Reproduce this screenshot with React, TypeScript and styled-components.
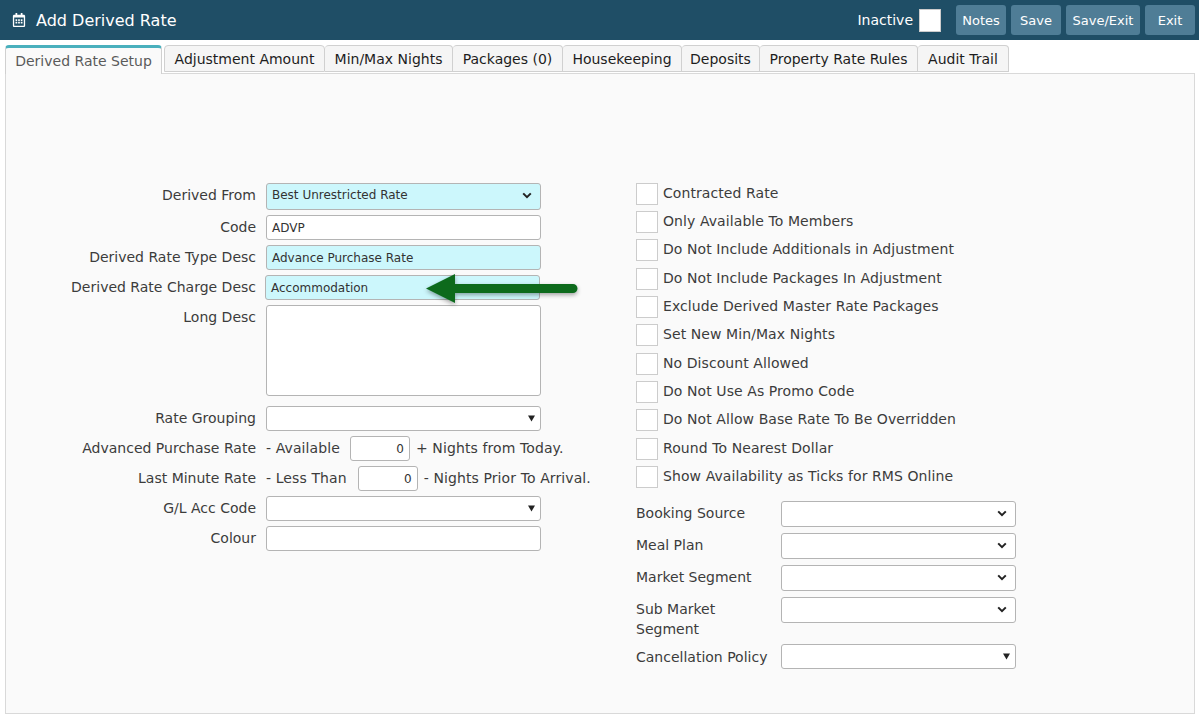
import React from "react";
import styled, { createGlobalStyle } from "styled-components";
import { FaRegCalendarAlt } from "react-icons/fa";

const tabs = [
  { name: "Derived Rate Setup", width: 157 },
  { name: "Adjustment Amount", width: 161 },
  { name: "Min/Max Nights", width: 128 },
  { name: "Packages (0)", width: 110 },
  { name: "Housekeeping", width: 119 },
  { name: "Deposits", width: 78 },
  { name: "Property Rate Rules", width: 158 },
  { name: "Audit Trail", width: 91 },
];

const checks = [
  "Contracted Rate",
  "Only Available To Members",
  "Do Not Include Additionals in Adjustment",
  "Do Not Include Packages In Adjustment",
  "Exclude Derived Master Rate Packages",
  "Set New Min/Max Nights",
  "No Discount Allowed",
  "Do Not Use As Promo Code",
  "Do Not Allow Base Rate To Be Overridden",
  "Round To Nearest Dollar",
  "Show Availability as Ticks for RMS Online",
];

function Chevron() {
  return (
    <ArrowIcon width="10" height="7" viewBox="0 0 10 7">
      <path d="M1.2 1.4 5 5.2l3.8-3.8" fill="none" stroke="#222" strokeWidth="2" />
    </ArrowIcon>
  );
}

function Triangle() {
  return (
    <TriangleIcon width="7" height="7" viewBox="0 0 7 7">
      <path d="M0 .5h7L3.5 6.5z" fill="#222" />
    </TriangleIcon>
  );
}

function App() {
  return (
    <>
      <GlobalStyle />
      <Header>
        <Title>
          <FaRegCalendarAlt size={14} />
          <span>Add Derived Rate</span>
        </Title>
        <Actions>
          <InactiveLabel>Inactive</InactiveLabel>
          <InactiveBox />
          <Button>Notes</Button>
          <Button>Save</Button>
          <Button $wide>Save/Exit</Button>
          <Button>Exit</Button>
        </Actions>
      </Header>
      <TabBar>
        {tabs.map((tab, index) => (
          <Tab key={tab.name} $active={index === 0} $width={tab.width}>
            {tab.name}
          </Tab>
        ))}
      </TabBar>
      <Panel>
        <LeftColumn>
          <Row>
            <Label>Derived From</Label>
            <Select $tinted $tall>
              Best Unrestricted Rate
              <Chevron />
            </Select>
          </Row>
          <Row>
            <Label>Code</Label>
            <Input>ADVP</Input>
          </Row>
          <Row>
            <Label>Derived Rate Type Desc</Label>
            <Input $tinted>Advance Purchase Rate</Input>
          </Row>
          <Row>
            <Label>Derived Rate Charge Desc</Label>
            <ArrowWrap>
              <Input $tinted>Accommodation</Input>
              <GreenArrow width="160" height="56" viewBox="0 0 160 56">
                <defs>
                  <filter id="arrowShadow" x="-10%" y="-30%" width="120%" height="170%">
                    <feDropShadow dx="0" dy="2" stdDeviation="2" floodColor="#000" floodOpacity="0.35" />
                  </filter>
                </defs>
                <path
                  d="M3 26.5 32 12v10h118a4.5 4.5 0 0 1 0 9H32v10z"
                  fill="#0e6b1f"
                  filter="url(#arrowShadow)"
                />
              </GreenArrow>
            </ArrowWrap>
          </Row>
          <Row>
            <Label>Long Desc</Label>
            <TextArea />
          </Row>
          <SpacedRow>
            <Label>Rate Grouping</Label>
            <Select>
              <Triangle />
            </Select>
          </SpacedRow>
          <Row>
            <Label>Advanced Purchase Rate</Label>
            <InlineText>- Available</InlineText>
            <NumberBox $gap={10}>0</NumberBox>
            <InlineText>+ Nights from Today.</InlineText>
          </Row>
          <Row>
            <Label>Last Minute Rate</Label>
            <InlineText>- Less Than</InlineText>
            <NumberBox $gap={11}>0</NumberBox>
            <InlineText>- Nights Prior To Arrival.</InlineText>
          </Row>
          <Row>
            <Label>G/L Acc Code</Label>
            <Select>
              <Triangle />
            </Select>
          </Row>
          <Row>
            <Label>Colour</Label>
            <Input />
          </Row>
        </LeftColumn>
        <RightColumn>
          <CheckList>
            {checks.map((check) => (
              <CheckRow key={check}>
                <CheckBox />
                <span>{check}</span>
              </CheckRow>
            ))}
          </CheckList>
          <SelectList>
            <SideRow>
              <SideLabel>Booking Source</SideLabel>
              <SideSelect>
                <Chevron />
              </SideSelect>
            </SideRow>
            <SideRow>
              <SideLabel>Meal Plan</SideLabel>
              <SideSelect>
                <Chevron />
              </SideSelect>
            </SideRow>
            <SideRow>
              <SideLabel>Market Segment</SideLabel>
              <SideSelect>
                <Chevron />
              </SideSelect>
            </SideRow>
            <SideRow>
              <SideLabel>Sub Market Segment</SideLabel>
              <SideSelect>
                <Chevron />
              </SideSelect>
            </SideRow>
            <SideRow>
              <SideLabel $low>Cancellation Policy</SideLabel>
              <SideSelect $short>
                <Triangle />
              </SideSelect>
            </SideRow>
          </SelectList>
        </RightColumn>
      </Panel>
    </>
  );
}

const GlobalStyle = createGlobalStyle`
  html, body {
    margin: 0;
    height: 717px;
    overflow: hidden;
    background: #fff;
    color: #3c3c3c;
    font-family: "DejaVu Sans", Tahoma, sans-serif;
    font-size: 14px;
  }
`;

const Header = styled.div`
  height: 40px;
  padding: 5px 4px 5px 12px;
  box-sizing: border-box;
  display: flex;
  align-items: center;
  justify-content: space-between;
  background-color: #1f4e66;
  color: #fff;
`;

const Title = styled.div`
  display: flex;
  align-items: center;
  gap: 10px;
  font-size: 16px;
`;

const Actions = styled.div`
  display: flex;
  align-items: center;
`;

const InactiveLabel = styled.span`
  font-size: 14px;
  margin-right: 6px;
`;

const InactiveBox = styled.div`
  width: 22px;
  height: 23px;
  box-sizing: border-box;
  margin-right: 10px;
  background-color: #fff;
  border: 1px solid #ccc;
`;

const Button = styled.div<{ $wide?: boolean }>`
  width: ${(p) => (p.$wide ? "74px" : "50px")};
  height: 30px;
  margin-left: 5px;
  display: flex;
  align-items: center;
  justify-content: center;
  border-radius: 3px;
  background-color: #4f7d96;
  color: #fff;
  font-size: 13px;
`;

const TabBar = styled.div`
  height: 33px;
  padding: 5px 0 0 5px;
  box-sizing: border-box;
  display: flex;
  align-items: flex-start;
`;

const Tab = styled.div<{ $active?: boolean; $width: number }>`
  width: ${(p) => p.$width}px;
  height: ${(p) => (p.$active ? "29px" : "27px")};
  padding-top: 3px;
  margin-right: ${(p) => (p.$active ? "2px" : "0")};
  box-sizing: border-box;
  position: relative;
  z-index: 1;
  text-align: center;
  border: 1px solid #d0d0d0;
  border-top: ${(p) => (p.$active ? "3px solid #4ab0bd" : "1px solid #d0d0d0")};
  border-bottom: ${(p) => (p.$active ? "none" : "1px solid #d0d0d0")};
  border-left: ${(p) => (p.$active ? "1px solid #d0d0d0" : "none")};
  border-radius: 4px 4px 0 0;
  background-color: ${(p) => (p.$active ? "#fafafa" : "#f5f5f5")};
  color: ${(p) => (p.$active ? "#5a5a5a" : "#1d1d1d")};
  font-size: 14px;
  line-height: 20px;
  white-space: nowrap;

  &:nth-child(2) {
    border-left: 1px solid #d0d0d0;
  }
`;

const Panel = styled.div`
  height: 641px;
  margin: 0 4px 0 5px;
  padding-top: 109px;
  box-sizing: border-box;
  display: flex;
  align-items: flex-start;
  border: 1px solid #d9d9d9;
  background-color: #fafafa;
`;

const LeftColumn = styled.div`
  width: 630px;
  flex: none;
  display: flex;
  flex-direction: column;
  gap: 5px;
`;

const Row = styled.div`
  display: flex;
  align-items: flex-start;
  min-height: 25px;
`;

const SpacedRow = styled(Row)`
  margin-top: 5px;
`;

const Label = styled.div`
  width: 250px;
  flex: none;
  margin-right: 10px;
  text-align: right;
  line-height: 25px;
  white-space: nowrap;
`;

const controlBase = `
  box-sizing: border-box;
  border: 1px solid #b4b4b4;
  border-radius: 3px;
  color: #333;
  font-size: 12px;
`;

const Input = styled.div<{ $tinted?: boolean }>`
  ${controlBase}
  width: 275px;
  height: 25px;
  padding: 0 5px;
  line-height: 24px;
  background-color: ${(p) => (p.$tinted ? "#ccf7fc" : "#fff")};
`;

const Select = styled.div<{ $tinted?: boolean; $tall?: boolean }>`
  ${controlBase}
  width: 275px;
  height: ${(p) => (p.$tall ? "27px" : "25px")};
  padding: ${(p) => (p.$tall ? "0 8px 3px 5px" : "0 8px 0 5px")};
  display: flex;
  align-items: center;
  justify-content: space-between;
  background-color: ${(p) => (p.$tinted ? "#ccf7fc" : "#fff")};
`;

const ArrowIcon = styled.svg`
  flex: none;
  margin-left: auto;
`;

const TriangleIcon = styled.svg`
  flex: none;
  margin-left: auto;
  margin-right: -3px;
`;

const ArrowWrap = styled.div`
  position: relative;
  margin-left: -1px;
`;

const GreenArrow = styled.svg`
  position: absolute;
  left: 158px;
  top: -13px;
`;

const TextArea = styled.div`
  ${controlBase}
  width: 275px;
  height: 91px;
  background-color: #fff;
`;

const InlineText = styled.div`
  line-height: 25px;
  white-space: nowrap;
  letter-spacing: 0.1px;
`;

const NumberBox = styled.div<{ $gap: number }>`
  ${controlBase}
  width: 60px;
  height: 25px;
  margin: 0 6px 0 ${(p) => p.$gap}px;
  padding-right: 5px;
  text-align: right;
  line-height: 24px;
  background-color: #fff;
`;

const RightColumn = styled.div`
  width: 380px;
  margin-top: -0.15px;
  display: flex;
  flex-direction: column;
`;

const CheckList = styled.div`
  display: flex;
  flex-direction: column;
  gap: 6.3px;
`;

const CheckRow = styled.div`
  display: flex;
  align-items: flex-start;
  gap: 5px;
  line-height: 20px;
  letter-spacing: 0.08px;
`;

const CheckBox = styled.div`
  width: 22px;
  height: 22px;
  flex: none;
  box-sizing: border-box;
  border: 1px solid #ccc;
  background-color: #fff;
`;

const SelectList = styled.div`
  margin-top: 13.15px;
  display: flex;
  flex-direction: column;
  gap: 6px;
`;

const SideRow = styled.div`
  display: flex;
  align-items: flex-start;
`;

const SideLabel = styled.div<{ $low?: boolean }>`
  width: 145px;
  flex: none;
  padding: ${(p) => (p.$low ? "3px" : "2px")} 8px 0 0;
  margin-bottom: -1px;
  box-sizing: border-box;
  line-height: 20px;
`;

const SideSelect = styled.div<{ $short?: boolean }>`
  ${controlBase}
  width: 235px;
  height: ${(p) => (p.$short ? "25px" : "26px")};
  padding: 0 8px;
  display: flex;
  align-items: center;
  background-color: #fff;
`;

export default App;
